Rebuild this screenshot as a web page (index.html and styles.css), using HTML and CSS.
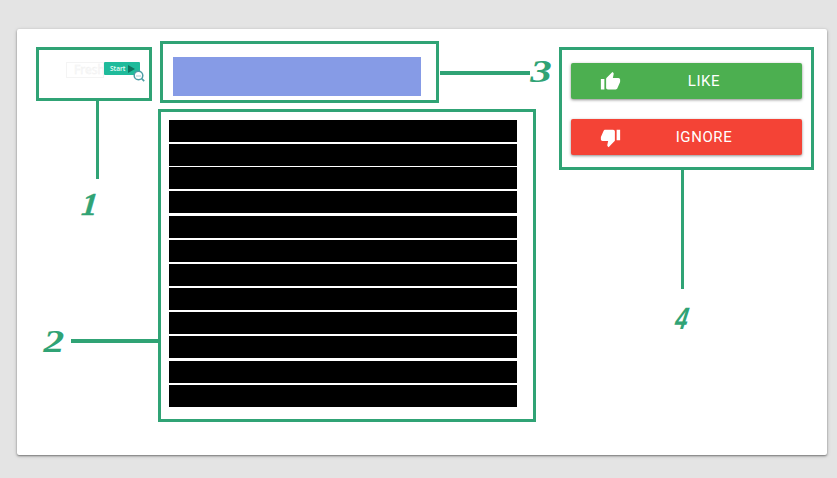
FILE: index.html
```html
<!DOCTYPE html>
<html lang="en">
<head>
<meta charset="utf-8">
<title>Suggestion card</title>
<link rel="stylesheet" href="styles.css">
</head>
<body>
<main class="card">
  <section class="frame frame-logo">
    <div class="logo">
      <span class="logo-name">Fresh</span>
      <span class="logo-start">Start<i class="play"></i></span>
      <svg class="lens" viewBox="0 0 12 12"><circle cx="5.5" cy="5.5" r="4.3" fill="#fff" stroke="#4c9da5" stroke-width="1.5"/><path d="M3 6h5" stroke="#a9cbd2"/><path d="M8.700 8.700l2.500 2.400" stroke="#4c9da5" stroke-width="1.6"/></svg>
    </div>
    <span class="line line-1"></span>
    <span class="num num-1">1</span>
  </section>
  <div class="middle">
    <section class="frame frame-title">
      <div class="title-block"></div>
      <span class="line line-3"></span>
      <span class="num num-3">3</span>
    </section>
    <section class="frame frame-text">
      <div class="row"></div><div class="row"></div><div class="row tight"></div><div class="row"></div>
      <div class="row loose"></div><div class="row"></div><div class="row"></div><div class="row"></div>
      <div class="row"></div><div class="row"></div><div class="row loose"></div><div class="row"></div>
      <span class="line line-2"></span>
      <span class="num num-2">2</span>
    </section>
  </div>
  <section class="frame frame-actions">
    <button class="btn like">
      <svg viewBox="0 0 24 24"><path d="M1 21h4V9H1v12zm22-11c0-1.100-.9-2-2-2h-6.310l.95-4.570.03-.320c0-.410-.170-.790-.440-1.060L14.170 1 7.590 7.590C7.220 7.950 7 8.450 7 9v10c0 1.100.9 2 2 2h9c.83 0 1.540-.5 1.840-1.220l3.020-7.050c.09-.23.14-.47.14-.73v-2z"/></svg>
      <span>LIKE</span>
    </button>
    <button class="btn ignore">
      <svg viewBox="0 0 24 24"><path d="M15 3H6c-.83 0-1.540.5-1.840 1.220l-3.020 7.050c-.09.23-.14.47-.14.73v2c0 1.100.9 2 2 2h6.310l-.95 4.570-.03.320c0 .41.17.79.44 1.060L9.830 23l6.590-6.590c.36-.36.58-.86.58-1.410V5c0-1.100-.9-2-2-2zm4 0v12h4V3h-4z"/></svg>
      <span>IGNORE</span>
    </button>
    <span class="line line-4"></span>
    <span class="num num-4">4</span>
  </section>
</main>
</body>
</html>
```
FILE: styles.css
```css
* { box-sizing: border-box; }
body {
  margin: 0;
  height: 478px;
  padding: 29px 10px 23px 17px;
  overflow: hidden;
  background: #e4e4e4;
  font-family: Roboto, "Liberation Sans", sans-serif;
}
.card {
  display: flex;
  align-items: flex-start;
  height: 426px;
  padding: 12px 13px 0 19px;
  background: #fff;
  border-radius: 2px;
  box-shadow: 0 1px 2px rgba(0,0,0,.42), 0 1px 4px rgba(0,0,0,.16);
}
.frame { position: relative; border: 3px solid #30a375; }
.frame-logo {
  width: 116px;
  height: 54px;
  margin: 6px 6px 0 0;
  padding: 12px 0 0 27px;
}
.logo { position: relative; display: flex; width: 75px; height: 16px; }
.logo-name {
  width: 38px;
  height: 16px;
  padding-left: 7px;
  overflow: hidden;
  border: 1px solid #f4f4f4;
  color: #fff;
  font: 12px/13px "Open Sans", sans-serif;
  -webkit-text-stroke: .5px #f0f0f0;
}
.logo-start {
  display: flex;
  align-items: center;
  gap: 3px;
  width: 36px;
  height: 13px;
  padding-left: 6px;
  border-radius: 1px;
  background: #1fbb9b;
  color: #e9fff9;
  font: 600 6.5px/12px "Open Sans", sans-serif;
}
.play {
  border-left: 7px solid #10745f;
  border-top: 4px solid transparent;
  border-bottom: 4px solid transparent;
}
.lens { position: absolute; left: 67px; top: 8px; width: 12px; height: 12px; }
.middle { width: 378px; margin-right: 23px; }
.frame-title {
  width: 279px;
  height: 62px;
  margin: 0 0 6px 2px;
  padding: 13px 15px 0 10px;
}
.title-block { height: 39px; background: #869be6; }
.frame-text { height: 313px; padding: 8px 16px 0 8px; }
.row { height: 22px; margin-bottom: 2px; background: #000; }
.row.tight { margin-top: -1px; }
.row.loose { margin-top: 3px; }
.frame-actions {
  width: 255px;
  height: 123px;
  margin-top: 6px;
  padding: 13px 9px 0;
}
.btn {
  display: flex;
  align-items: center;
  width: 231px;
  height: 36px;
  margin: 0 0 20px;
  padding: 0 0 0 29px;
  border: 0;
  border-radius: 2px;
  color: #fff;
  font: 400 15px/36px Roboto, sans-serif;
  letter-spacing: .6px;
  box-shadow: 0 1px 3px rgba(0,0,0,.45);
}
.btn svg { width: 21px; height: 21px; fill: #fff; }
.btn span { width: 166px; text-align: center; }
.like { background: #4caf50; }
.ignore { background: #f44336; }
.line { position: absolute; background: #30a375; }
.line-1 { left: 57px; top: 51px; width: 3px; height: 78px; }
.line-2 { left: -90px; top: 227px; width: 87px; height: 4px; }
.line-3 { left: 277px; top: 27px; width: 90px; height: 4px; }
.line-4 { left: 119px; top: 120px; width: 3px; height: 119px; }
.num {
  position: absolute;
  width: 22px;
  height: 24px;
  color: #30a375;
  font: italic 700 32px/24px "Liberation Serif", serif;
  text-align: center;
}
.num-1 { left: 40px; top: 142px; -webkit-text-stroke: .5px #30a375; transform: skewX(-6deg); }
.num-2 { left: -118px; top: 217px; transform: scaleX(1.3); }
.num-3 { left: 367px; top: 15px; transform: scaleX(1.35); }
.num-4 { left: 109px; top: 257px; font-family: "Liberation Sans", sans-serif; font-size: 31px; transform: skewX(-10deg) scaleX(.72); }
```
